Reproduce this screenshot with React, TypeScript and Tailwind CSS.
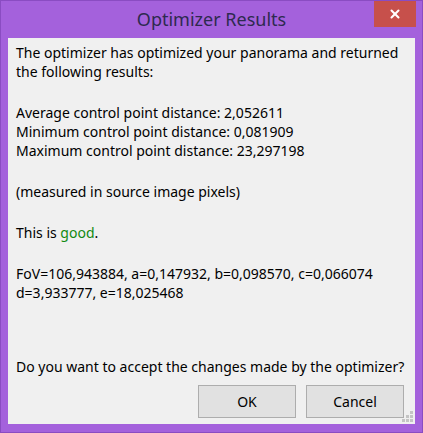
import { X } from 'lucide-react'

export default function App() {
  return (
    <div className="w-[423px] h-[433px] bg-[#a461dc] border border-[#8a4cc2] flex flex-col" style={{ fontFamily: '"Noto Sans", "Open Sans", sans-serif' }}>
      {/* title bar */}
      <div className="h-[37px] shrink-0 flex items-start relative">
        <div className="flex-1 text-center text-[18px] leading-[20px] pt-[8px] text-[#2e2a4f]">Optimizer Results</div>
        <div className="absolute right-[6px] top-0 w-[42px] h-[26px] bg-[#c7504b] flex items-center justify-center">
          <X className="w-[14px] h-[14px] text-white" strokeWidth={3.5} />
        </div>
      </div>

      {/* client area */}
      <div className="mx-[7px] mb-[8px] flex-1 bg-[#f0f0f0] relative flex flex-col px-[8px] text-[14px] leading-[19px] text-[#000]">
        <p className="mt-[5px]">
          The optimizer has optimized your panorama and returned
          <br />
          the following results:
        </p>
        <p className="mt-[22px]">
          Average control point distance: 2,052611
          <br />
          Minimum control point distance: 0,081909
          <br />
          Maximum control point distance: 23,297198
        </p>
        <p className="mt-[22px]">(measured in source image pixels)</p>
        <p className="mt-[22px]">
          This is <span className="text-[#128a12]">good</span>.
        </p>
        <p className="mt-[22px]">
          FoV=106,943884, a=0,147932, b=0,098570, c=0,066074
          <br />
          d=3,933777, e=18,025468
        </p>
        <p className="mt-auto mb-[9px]">Do you want to accept the changes made by the optimizer?</p>
        <div className="flex justify-end gap-[10px] mb-[6px] pr-[3px]">
          <button className="w-[98px] h-[33px] bg-[#e1e1e1] border border-[#adadad] text-[14px]">OK</button>
          <button className="w-[98px] h-[33px] bg-[#e1e1e1] border border-[#adadad] text-[14px]">Cancel</button>
        </div>
        {/* resize grip */}
        <svg className="absolute right-[2px] bottom-[2px]" width="11" height="11" viewBox="0 0 11 11">
          <g fill="#c4c4c4">
            <rect x="8" y="0" width="3" height="3" />
            <rect x="4" y="4" width="3" height="3" />
            <rect x="8" y="4" width="3" height="3" />
            <rect x="0" y="8" width="3" height="3" />
            <rect x="4" y="8" width="3" height="3" />
            <rect x="8" y="8" width="3" height="3" />
          </g>
        </svg>
      </div>
    </div>
  )
}
